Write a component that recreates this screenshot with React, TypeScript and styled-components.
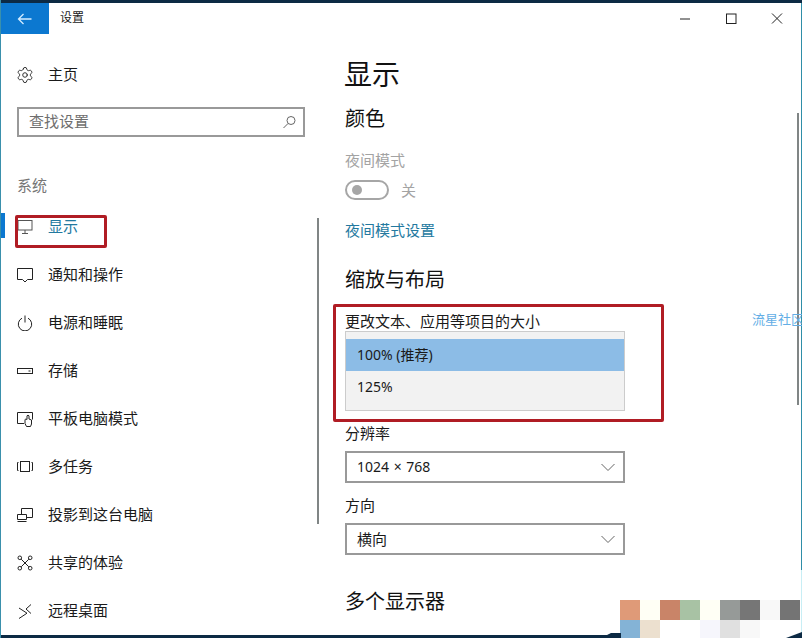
import React from "react";
import styled, { createGlobalStyle } from "styled-components";
import { Settings } from "lucide-react";

const GlobalStyle = createGlobalStyle`
  html, body {
    margin: 0;
    padding: 0;
    background: #ffffff;
  }
  * {
    box-sizing: border-box;
  }
`;

const Window = styled.div`
  position: relative;
  width: 802px;
  height: 638px;
  overflow: hidden;
  display: flex;
  flex-direction: column;
  background: #ffffff;
  color: #1a1a1a;
  font-family: "Noto Sans CJK SC", "Noto Sans", sans-serif;
  font-size: 15px;
  line-height: 20px;
  border-left: 1px solid #3a90ac;
`;

const TopStrip = styled.div`
  height: 3px;
  margin-left: -1px;
  background: #0c2a44;
  flex: none;
`;

const BottomStrip = styled.div`
  height: 3px;
  margin-left: -1px;
  background: #0c2a44;
  flex: none;
`;

const TitleBar = styled.div`
  height: 31px;
  flex: none;
  display: flex;
  align-items: center;
`;

const BackButton = styled.div`
  width: 49px;
  height: 31px;
  margin-left: -1px;
  background: #0c78d0;
  display: flex;
  align-items: center;
  justify-content: center;
`;

const WindowTitle = styled.span`
  font-size: 12px;
  margin: 0 0 3px 11px;
  flex: 1;
`;

const WindowControls = styled.div`
  display: flex;
  margin-right: 2px;
`;

const WindowButton = styled.div`
  width: 46px;
  height: 31px;
  display: flex;
  align-items: center;
  justify-content: center;
`;

const Body = styled.div`
  flex: 1;
  min-height: 0;
  display: flex;
`;

const Sidebar = styled.nav`
  width: 329px;
  flex: none;
  padding-top: 17px;
`;

const NavRow = styled.div<{ $active?: boolean }>`
  position: relative;
  height: 48px;
  padding-left: 16px;
  display: flex;
  align-items: center;
  gap: 15px;
  color: ${(p) => (p.$active ? "#23799f" : "#1a1a1a")};

  ${(p) =>
    p.$active &&
    `
    &::before {
      content: "";
      position: absolute;
      left: -1px;
      top: 10px;
      width: 5px;
      height: 25px;
      background: #0c78d0;
    }
  `}
`;

const NavLabel = styled.span`
  margin-bottom: 2px;
`;

const SearchBox = styled.div`
  width: 288px;
  height: 30px;
  margin: 8px 0 0 16px;
  padding: 0 7px 0 10px;
  border: 2px solid #999999;
  display: flex;
  align-items: center;
  justify-content: space-between;
  color: #6e6e6e;
`;

const SearchHint = styled.span`
  margin-bottom: 2px;
`;

const GroupLabel = styled.div`
  margin: 36px 0 6px 16px;
  height: 24px;
  line-height: 24px;
  color: #767676;
`;

const Content = styled.main`
  flex: 1;
  padding: 19px 0 0 15px;
`;

const PageTitle = styled.h1`
  margin: 0 0 0 -1px;
  font-size: 28px;
  font-weight: 400;
  line-height: 40px;
  color: #111111;
`;

const SectionTitle = styled.h2<{ $gap: number }>`
  margin: ${(p) => p.$gap}px 0 0;
  font-size: 20px;
  font-weight: 400;
  line-height: 28px;
  color: #111111;
`;

const FieldLabel = styled.div<{ $gap: number; $muted?: boolean }>`
  margin-top: ${(p) => p.$gap}px;
  color: ${(p) => (p.$muted ? "#a3a3a3" : "#1a1a1a")};
`;

const ToggleRow = styled.div`
  height: 20px;
  margin-top: 10px;
  display: flex;
  align-items: center;
  gap: 12px;
  color: #a3a3a3;
`;

const ToggleTrack = styled.div`
  width: 44px;
  height: 20px;
  border: 2px solid #a6a6a6;
  border-radius: 10px;
  padding-left: 5px;
  display: flex;
  align-items: center;
`;

const ToggleKnob = styled.div`
  width: 10px;
  height: 10px;
  border-radius: 50%;
  background: #a6a6a6;
`;

const SettingsLink = styled.div`
  margin-top: 20px;
  color: #23799f;
`;

const DropdownList = styled.div`
  width: 280px;
  height: 80px;
  padding: 7px 0;
  background: #f2f2f2;
  border: 1px solid #cccccc;
`;

const DropdownOption = styled.div<{ $selected?: boolean }>`
  height: 32px;
  padding: 0 0 1px 11px;
  display: flex;
  align-items: center;
  font-family: "Noto Sans", "Noto Sans CJK SC", sans-serif;
  font-size: 14px;
  background: ${(p) => (p.$selected ? "#8cbce6" : "transparent")};
`;

const SelectBox = styled.div`
  width: 280px;
  height: 32px;
  margin-top: 8px;
  padding: 0 7px 0 10px;
  border: 2px solid #999999;
  display: flex;
  align-items: center;
  justify-content: space-between;
`;

const NumericValue = styled.span`
  font-family: "Noto Sans", "Noto Sans CJK SC", sans-serif;
  font-size: 14px;
  word-spacing: 1px;
`;

const Annotation = styled.div<{ $x: number; $y: number; $w: number; $h: number }>`
  position: absolute;
  left: ${(p) => p.$x}px;
  top: ${(p) => p.$y}px;
  width: ${(p) => p.$w}px;
  height: ${(p) => p.$h}px;
  border: 3px solid #b01c24;
  border-radius: 2px;
`;

const Scrollbar = styled.div<{ $x: number; $y: number; $h: number }>`
  position: absolute;
  left: ${(p) => p.$x}px;
  top: ${(p) => p.$y}px;
  width: 2px;
  height: ${(p) => p.$h}px;
  background: #808585;
`;

const RightEdge = styled.div`
  position: absolute;
  left: 800px;
  top: 3px;
  bottom: 3px;
  width: 1px;
  background: linear-gradient(#2f8ea8 0 567px, #c8eef5 567px);
`;

const Watermark = styled.div`
  position: absolute;
  left: 751px;
  top: 310px;
  width: 51px;
  overflow: hidden;
  white-space: nowrap;
  font-size: 13px;
  line-height: 18px;
  color: #63aee6;
`;

const Mosaic = styled.div`
  position: absolute;
  left: 619px;
  top: 600px;
  display: grid;
  grid-template-columns: repeat(9, 20px);
  grid-auto-rows: 20px;
`;

const MosaicCell = styled.div<{ $color: string }>`
  background: ${(p) => p.$color};
`;

const Wedge = styled.svg<{ $x: number }>`
  position: absolute;
  left: ${(p) => p.$x}px;
  bottom: 0;
  width: 16px;
  height: 6px;
  fill: #0c2a44;
`;

const Glyph = styled.svg`
  width: 16px;
  height: 16px;
  flex: none;
  fill: none;
  stroke: #222222;
  stroke-width: 1;
`;

const Chevron = () => (
  <Glyph viewBox="0 0 16 16" style={{ stroke: "#666666" }}>
    <path d="M1.5 5l6.5 6.5L14.5 5" />
  </Glyph>
);

const icons: Record<string, React.ReactNode> = {
  display: (
    <>
      <rect x="1" y="1.5" width="14" height="9.5" stroke="#555555" />
      <path d="M8 11v3M5 14.5h6" stroke="#555555" />
    </>
  ),
  notify: <path d="M0.5 1.5h15v11h-5L8 15l-2.5-2.5h-5z" />,
  power: (
    <>
      <path d="M5 3.2a6.7 6.7 0 1 0 6 0" />
      <path d="M8 0.5v7" />
    </>
  ),
  storage: (
    <>
      <rect x="0.5" y="5.5" width="15" height="5" />
      <path d="M11.5 8h2" />
    </>
  ),
  tablet: (
    <>
      <path d="M7 12.5H0.5v-11h15v7" />
      <path d="M9.5 15.5l-1.5-3V9q0-1 1-1l1 .5V4.8q1-1.3 2 0V8l2.5 1v4l-1 2.5z" />
    </>
  ),
  multitask: (
    <>
      <rect x="3.5" y="2.5" width="9" height="10" />
      <path d="M1.5 3.5H0.5v8h1M14.5 3.5h1v8h-1" />
    </>
  ),
  project: (
    <>
      <path d="M4.5 7V1.5h11v9H10" />
      <path d="M0.5 7.5h9v5h-9zM0.5 14.5h9" />
    </>
  ),
  share: (
    <>
      <circle cx="2.8" cy="2.8" r="1.8" />
      <circle cx="13.2" cy="2.8" r="1.8" />
      <circle cx="2.8" cy="13.2" r="1.8" />
      <circle cx="13.2" cy="13.2" r="1.8" />
      <path d="M4.2 4.2l7.6 7.6M11.8 4.2l-7.6 7.6" />
    </>
  ),
  remote: <path d="M2 5l8 5.2-8 5.3M14 1.5L9 6l5 4.5" />,
};

const navItems = [
  { icon: "display", label: "显示", active: true },
  { icon: "notify", label: "通知和操作" },
  { icon: "power", label: "电源和睡眠" },
  { icon: "storage", label: "存储" },
  { icon: "tablet", label: "平板电脑模式" },
  { icon: "multitask", label: "多任务" },
  { icon: "project", label: "投影到这台电脑" },
  { icon: "share", label: "共享的体验" },
  { icon: "remote", label: "远程桌面" },
];

const mosaicColors = [
  "#df9a78", "#fffff5", "#c98468", "#a8c2a4", "#fffff5", "#969a98", "#767676", "#f8f8f8", "#747474",
  "#84b3d6", "#ece0cf", "#ffffff", "#ffffff", "#f6f6fc", "#e0e0e0", "#f8f8f8", "#ffffff", "#ffffff",
];

export default function App() {
  return (
    <Window>
      <GlobalStyle />
      <TopStrip />
      <TitleBar>
        <BackButton>
          <Glyph viewBox="0 0 16 16" style={{ stroke: "#d4ecff", strokeWidth: 1.3 }}>
            <path d="M14.5 8H1.5M6.5 3L1.5 8l5 5" />
          </Glyph>
        </BackButton>
        <WindowTitle>设置</WindowTitle>
        <WindowControls>
          <WindowButton>
            <Glyph viewBox="0 0 16 16">
              <path d="M3 8h10" />
            </Glyph>
          </WindowButton>
          <WindowButton>
            <Glyph viewBox="0 0 16 16">
              <rect x="3.5" y="3" width="9.5" height="9.5" />
            </Glyph>
          </WindowButton>
          <WindowButton>
            <Glyph viewBox="0 0 16 16">
              <path d="M3 2.5l10 10M13 2.5L3 12.5" />
            </Glyph>
          </WindowButton>
        </WindowControls>
      </TitleBar>
      <Body>
        <Sidebar>
          <NavRow>
            <Settings size={16} viewBox="1.5 1.5 21 21" strokeWidth={1.2} color="#222222" />
            <NavLabel>主页</NavLabel>
          </NavRow>
          <SearchBox>
            <SearchHint>查找设置</SearchHint>
            <Glyph viewBox="0 0 16 16" style={{ stroke: "#666666" }}>
              <circle cx="11" cy="6.5" r="4" />
              <path d="M8 9.5L3.5 14" />
            </Glyph>
          </SearchBox>
          <GroupLabel>系统</GroupLabel>
          {navItems.map((item) => (
            <NavRow key={item.label} $active={item.active}>
              <Glyph viewBox="0 0 16 16">{icons[item.icon]}</Glyph>
              <NavLabel>{item.label}</NavLabel>
            </NavRow>
          ))}
        </Sidebar>
        <Content>
          <PageTitle>显示</PageTitle>
          <SectionTitle $gap={11}>颜色</SectionTitle>
          <FieldLabel $gap={18} $muted>
            夜间模式
          </FieldLabel>
          <ToggleRow>
            <ToggleTrack>
              <ToggleKnob />
            </ToggleTrack>
            关
          </ToggleRow>
          <SettingsLink>夜间模式设置</SettingsLink>
          <SectionTitle $gap={25}>缩放与布局</SectionTitle>
          <FieldLabel $gap={18}>更改文本、应用等项目的大小</FieldLabel>
          <DropdownList>
            <DropdownOption $selected>100% (推荐)</DropdownOption>
            <DropdownOption>125%</DropdownOption>
          </DropdownList>
          <FieldLabel $gap={12}>分辨率</FieldLabel>
          <SelectBox>
            <NumericValue>1024 × 768</NumericValue>
            <Chevron />
          </SelectBox>
          <FieldLabel $gap={12}>方向</FieldLabel>
          <SelectBox>
            横向
            <Chevron />
          </SelectBox>
          <SectionTitle $gap={32}>多个显示器</SectionTitle>
        </Content>
      </Body>
      <BottomStrip />

      <RightEdge />
      <Scrollbar $x={316} $y={218} $h={306} />
      <Scrollbar $x={796} $y={113} $h={292} />
      <Annotation $x={14} $y={215} $w={92} $h={33} />
      <Annotation $x={332} $y={304} $w={331} $h={118} />
      <Watermark>流星社区</Watermark>
      <Mosaic>
        {mosaicColors.map((color, i) => (
          <MosaicCell key={i} $color={color} />
        ))}
      </Mosaic>
      <Wedge $x={604} viewBox="0 0 16 6">
        <polygon points="0,6 0,4 6,1 16,1 16,6" />
      </Wedge>
      <Wedge $x={785} viewBox="0 0 16 6">
        <polygon points="0,6 16,0 16,6" />
      </Wedge>
    </Window>
  );
}
